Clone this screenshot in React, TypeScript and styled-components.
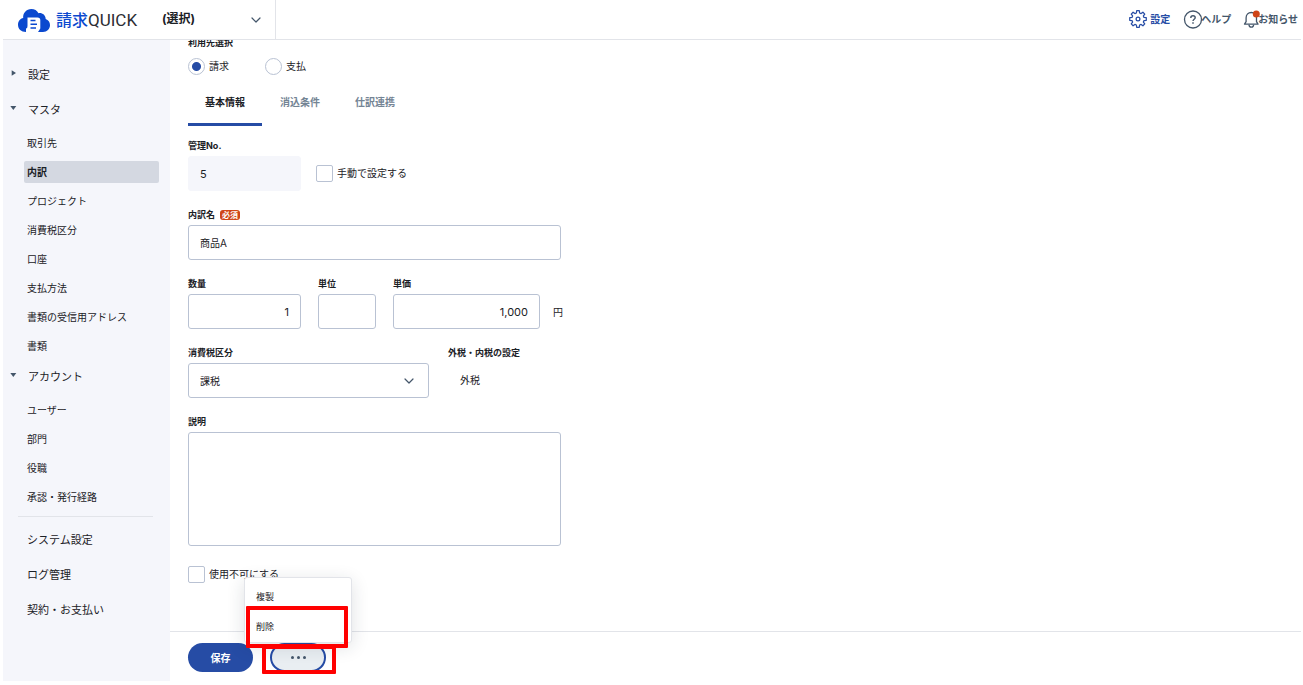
import React, { useState } from 'react';
import styled, { createGlobalStyle } from 'styled-components';

const color = {
  primary: '#264ca5',
  text: '#1b2126',
  slate: '#44566a',
  muted: '#748494',
  line: '#e2e4e9',
  field: '#b9c2d3',
  panel: '#f5f6fb',
  active: '#d4d8e1',
  danger: '#cf4417',
  mark: '#ff0000',
};

const GlobalStyle = createGlobalStyle`
  *, *::before, *::after { box-sizing: border-box; }
  body { margin: 0; background: #fff; }
  body, button, input, select, textarea {
    font-family: Inter, 'Noto Sans CJK JP', sans-serif;
    font-size: 10px;
    color: ${color.text};
  }
  a { color: inherit; text-decoration: none; }
  ul { list-style: none; margin: 0; padding: 0; }
`;

const Page = styled.div`
  display: flex;
  flex-direction: column;
  min-height: 100vh;
  padding: 0 2px 4px 3px;
`;

/* ---------- header ---------- */

const Header = styled.header`
  display: flex;
  align-items: stretch;
  height: 40px;
  border-bottom: 1px solid ${color.line};
`;

const Brand = styled.a`
  display: flex;
  align-items: center;
  width: 148px;
  padding-left: 15px;
  gap: 6px;
`;

const BrandName = styled.span`
  display: flex;
  align-items: center;
  font-size: 16px;
  line-height: 24px;
  font-weight: 500;
  color: #0b49cf;
`;

const BrandLatin = styled.span`
  font-family: Roboto, sans-serif;
  font-size: 17px;
  font-weight: 400;
  color: #2c2d33;
`;

const SelectBox = styled.div<{ $bordered?: boolean }>`
  position: relative;
  display: flex;
  height: ${(p) => (p.$bordered ? '35px' : 'auto')};

  svg {
    position: absolute;
    top: 50%;
    right: 15px;
    transform: translateY(-50%);
    pointer-events: none;
  }
`;

const CompanySelect = styled.select`
  appearance: none;
  width: 125px;
  padding: 0 32px 2px 11px;
  border: 0;
  border-right: 1px solid ${color.line};
  background: transparent;
  font-size: 12px;
  font-weight: 700;
`;

const HeaderLinks = styled.nav`
  display: flex;
  align-items: center;
  gap: 13px;
  margin-left: auto;
  padding: 0 3px 2px 0;
`;

const HeaderLink = styled.a<{ $active?: boolean }>`
  display: flex;
  align-items: center;
  gap: ${(p) => (p.$active ? '3px' : '0')};
  font-weight: 700;
  line-height: 16px;
  white-space: nowrap;
  color: ${(p) => (p.$active ? color.primary : color.slate)};

  svg { overflow: visible; }
`;

/* ---------- sidebar ---------- */

const Body = styled.div`
  display: flex;
  flex: 1;
`;

const Sidebar = styled.nav`
  flex: 0 0 167px;
  padding: 23px 11px 0 7px;
  background: ${color.panel};
`;

const SectionToggle = styled.button`
  display: flex;
  align-items: center;
  width: 100%;
  height: 22px;
  padding: 0;
  border: 0;
  background: none;
  font-size: 11px;
  text-align: left;
  cursor: pointer;

  svg { width: 7px; margin-right: 11px; margin-bottom: 3px; }
`;

const Section = styled.div`
  margin-bottom: 13px;
`;

const SubList = styled.ul`
  display: flex;
  flex-direction: column;
  gap: 7px;
  padding: 12px 0 0 14px;
  margin-bottom: -5px;
`;

const SubLink = styled.a<{ $active?: boolean }>`
  display: block;
  padding-left: 3px;
  border-radius: 2px;
  line-height: 22px;
  font-weight: ${(p) => (p.$active ? 700 : 400)};
  background: ${(p) => (p.$active ? color.active : 'transparent')};
`;

const SideDivider = styled.hr`
  margin: 0 6px 12px 8px;
  border: 0;
  border-top: 1px solid ${color.line};
`;

const PlainLink = styled.a`
  display: block;
  margin-bottom: 13px;
  padding-left: 17px;
  font-size: 11px;
  line-height: 22px;
`;

/* ---------- form ---------- */

const Main = styled.main`
  display: flex;
  flex: 1;
  flex-direction: column;
  min-width: 0;
`;

const Scroller = styled.div`
  flex: 1;
  overflow: hidden;
  padding: 0 18px 24px;
`;

const Form = styled.form`
  max-width: 375px;
  margin-top: -3px;
`;

const Label = styled.label`
  display: flex;
  align-items: center;
  gap: 5px;
  margin-bottom: 4px;
  font-size: 9px;
  line-height: 12px;
  font-weight: 700;
  white-space: nowrap;
`;

const Required = styled.span`
  padding: 0 2px;
  border-radius: 3px;
  background: ${color.danger};
  color: #fff;
  font-size: 8px;
  line-height: 10px;
`;

const RadioRow = styled.div`
  display: flex;
  gap: 36px;
  margin: 9px 0 5px;
`;

const Choice = styled.label`
  display: flex;
  align-items: center;
  gap: 4px;
  line-height: 17px;
  white-space: nowrap;
`;

const Radio = styled.input.attrs({ type: 'radio' })`
  appearance: none;
  width: 17px;
  height: 17px;
  margin: 0;
  border: 1px solid ${color.field};
  border-radius: 50%;
  background: #fff;

  &:checked {
    background: radial-gradient(circle, ${color.primary} 4px, #fff 5px);
  }
`;

const Check = styled.input.attrs({ type: 'checkbox' })`
  appearance: none;
  width: 17px;
  height: 17px;
  margin: 0;
  border: 1px solid ${color.field};
  border-radius: 2px;
  background: #fff;

  &:checked { background: ${color.primary}; }
`;

const Tabs = styled.div`
  display: flex;
  gap: 1px;
  margin-bottom: 14px;
`;

const Tab = styled.button<{ $active?: boolean }>`
  height: 46px;
  padding: 0 17px;
  border: 0;
  border-bottom: 3px solid ${(p) => (p.$active ? color.primary : 'transparent')};
  background: none;
  font-weight: 700;
  color: ${(p) => (p.$active ? color.text : color.muted)};
`;

const Row = styled.div<{ $gap: number }>`
  display: flex;
  align-items: flex-end;
  gap: ${(p) => p.$gap}px;
`;

const Field = styled.div<{ $width?: number }>`
  width: ${(p) => (p.$width ? `${p.$width}px` : 'auto')};
  margin-bottom: 18px;
`;

const Input = styled.input<{ $numeric?: boolean; $wide?: boolean }>`
  display: block;
  width: ${(p) => (p.$wide ? '373px' : '100%')};
  height: 35px;
  padding: 0 11px;
  border: 1px solid ${color.field};
  border-radius: 3px;
  background: #fff;
  font-size: ${(p) => (p.$numeric ? '11px' : '10px')};
  text-align: ${(p) => (p.$numeric ? 'right' : 'left')};

  &:read-only {
    border-color: ${color.panel};
    background: ${color.panel};
    text-align: left;
  }
`;

const FieldSelect = styled.select`
  appearance: none;
  width: 100%;
  padding: 0 36px 0 11px;
  border: 1px solid ${color.field};
  border-radius: 3px;
  background: #fff;
`;

const Inline = styled.div`
  display: flex;
  align-items: center;
  height: 35px;
  margin-bottom: 18px;
`;

const Value = styled.output`
  display: block;
  padding-left: 12px;
  line-height: 35px;
`;

const TextArea = styled.textarea`
  display: block;
  width: 373px;
  height: 114px;
  margin-bottom: 20px;
  padding: 8px 11px;
  border: 1px solid ${color.field};
  border-radius: 3px;
  resize: none;
`;

/* ---------- footer ---------- */

const Footer = styled.footer`
  display: flex;
  gap: 17px;
  height: 50px;
  padding: 11px 18px 0;
  border-top: 1px solid ${color.line};
`;

const SaveButton = styled.button`
  width: 65px;
  height: 29px;
  padding: 0;
  border: 0;
  border-radius: 15px;
  background: ${color.primary};
  color: #fff;
  font-weight: 700;
`;

const MoreWrap = styled.div`
  position: relative;
  height: 29px;
`;

const MoreButton = styled.button`
  display: flex;
  align-items: center;
  justify-content: center;
  width: 56px;
  height: 29px;
  padding: 0;
  border: 2px solid ${color.primary};
  border-radius: 15px;
  background: #e9eef2;
`;

const Menu = styled.div`
  position: absolute;
  bottom: 100%;
  left: -26px;
  width: 108px;
  padding: 3px 0 1px;
  border: 1px solid ${color.line};
  border-radius: 3px;
  background: #fff;
  box-shadow: 0 4px 18px rgba(30, 40, 60, 0.14);
`;

const MenuItem = styled.button`
  display: block;
  width: 100%;
  height: 30px;
  padding: 0 11px;
  border: 0;
  background: none;
  font-size: 9px;
  text-align: left;
`;

const Highlight = styled.div`
  position: absolute;
  border: 4px solid ${color.mark};
  border-radius: 1px;
  pointer-events: none;
`;

const MenuHighlight = styled(Highlight)`
  top: -37px;
  left: -24px;
  width: 102px;
  height: 42px;
`;

const MoreHighlight = styled(Highlight)`
  top: 2px;
  left: -8px;
  width: 74px;
  height: 29px;
`;

/* ---------- drawings ---------- */

const CloudLogo = () => (
  <svg width="32" height="24" viewBox="0 0 32 24" aria-hidden="true">
    <path
      d="M8 24C3.200 24 0 21 0 16.800C0 13.400 2.200 10.800 5.200 10.100C4.600 5 8.500 1 13.300 1C16.600 1 19.100 2.600 20.500 5.200C24.200 4.600 27.500 7 27.700 10.900C30.300 11.800 32 14.100 32 17C32 21 29 24 25 24Z"
      fill="#0b49cf"
    />
    <path d="M9.500 9.500H19.500Q22.300 9.500 22.300 12V20.500L20 24H8V20.500Q9.500 20.500 9.500 18Z" fill="#fff" />
    <path d="M12.500 12.500H17.500M12.500 16.200H19M12.500 20H18" stroke="#0b49cf" strokeWidth="1.500" />
  </svg>
);

const Chevron = () => (
  <svg width="10" height="6" viewBox="0 0 10 6" fill="none" stroke={color.slate} strokeWidth="1.200" aria-hidden="true">
    <path d="M1 1L5 5L9 1" strokeLinecap="round" strokeLinejoin="round" />
  </svg>
);

const Triangle = ({ open }: { open: boolean }) => (
  <svg height="6" viewBox="0 0 7 6" fill={color.slate} aria-hidden="true">
    {open ? <path d="M0.300 1H6.300L3.300 5Z" /> : <path d="M1.700 0.200L6 3L1.700 5.800Z" />}
  </svg>
);

const gearPath = (() => {
  const parts: string[] = [];
  const point = (radius: number, degrees: number) => {
    const a = (degrees * Math.PI) / 180;
    return `${(10 + radius * Math.cos(a)).toFixed(2)} ${(10 + radius * Math.sin(a)).toFixed(2)}`;
  };
  for (let tooth = 0; tooth < 8; tooth += 1) {
    const mid = tooth * 45;
    parts.push(`${point(6.9, mid - 15)} L${point(9.3, mid - 9)}`);
    parts.push(`${point(9.3, mid + 9)} L${point(6.9, mid + 15)}`);
  }
  return `M${parts.join(' L')}Z`;
})();

const GearIcon = () => (
  <svg width="18" height="18" viewBox="0 0 20 20" fill="none" stroke="currentColor" strokeWidth="1.400" strokeLinejoin="round" aria-hidden="true">
    <path d={gearPath} />
    <circle cx="10" cy="10" r="2.100" />
  </svg>
);

const HelpIcon = () => (
  <svg width="18" height="18" viewBox="0 0 18 18" fill="none" stroke="currentColor" strokeWidth="1.300" aria-hidden="true">
    <circle cx="10" cy="9.500" r="8.500" />
    <path d="M7.800 7.900C7.800 6.500 8.700 5.800 10 5.800S12.200 6.600 12.200 7.700C12.200 9.200 10 9.300 10 11" strokeWidth="1.400" />
    <path d="M10 12.200V13.700" strokeWidth="1.500" />
  </svg>
);

const BellIcon = () => (
  <svg width="14" height="18" viewBox="0 0 14 18" fill="none" stroke="currentColor" strokeWidth="1.300" aria-hidden="true">
    <path d="M0.500 14.200H14L12.500 11.700V7.700C12.500 4.500 10.300 2.500 7.300 2.500S2.100 4.500 2.100 7.700V11.700Z" strokeLinejoin="round" />
    <path d="M5 14.700C5 18 9.600 18 9.600 14.700" />
    <circle cx="12.300" cy="4" r="3.500" fill={color.danger} stroke="none" />
  </svg>
);

const Dots = () => (
  <svg width="15" height="3" viewBox="0 0 15 3" fill={color.slate} aria-hidden="true">
    <circle cx="1.500" cy="1.500" r="1.500" />
    <circle cx="7.500" cy="1.500" r="1.500" />
    <circle cx="13.500" cy="1.500" r="1.500" />
  </svg>
);

/* ---------- data ---------- */

const sections = [
  { title: '設定', items: [] },
  {
    title: 'マスタ',
    items: ['取引先', '内訳', 'プロジェクト', '消費税区分', '口座', '支払方法', '書類の受信用アドレス', '書類'],
  },
  { title: 'アカウント', items: ['ユーザー', '部門', '役職', '承認・発行経路'] },
];

const plainLinks = ['システム設定', 'ログ管理', '契約・お支払い'];
const tabs = ['基本情報', '消込条件', '仕訳連携'];

export default function App() {
  const [tab, setTab] = useState(tabs[0]);

  return (
    <>
      <GlobalStyle />
      <Page>
        <Header>
          <Brand href="#">
            <CloudLogo />
            <BrandName>
              請求<BrandLatin>QUICK</BrandLatin>
            </BrandName>
          </Brand>
          <SelectBox>
            <CompanySelect aria-label="会社">
              <option>(選択)</option>
            </CompanySelect>
            <Chevron />
          </SelectBox>
          <HeaderLinks>
            <HeaderLink href="#" $active>
              <GearIcon />
              設定
            </HeaderLink>
            <HeaderLink href="#">
              <HelpIcon />
              ヘルプ
            </HeaderLink>
            <HeaderLink href="#">
              <BellIcon />
              お知らせ
            </HeaderLink>
          </HeaderLinks>
        </Header>

        <Body>
          <Sidebar>
            {sections.map((section) => (
              <Section key={section.title}>
                <SectionToggle type="button" aria-expanded={section.items.length > 0}>
                  <Triangle open={section.items.length > 0} />
                  {section.title}
                </SectionToggle>
                {section.items.length > 0 && (
                  <SubList>
                    {section.items.map((item) => (
                      <li key={item}>
                        <SubLink href="#" $active={item === '内訳'}>
                          {item}
                        </SubLink>
                      </li>
                    ))}
                  </SubList>
                )}
              </Section>
            ))}
            <SideDivider />
            {plainLinks.map((item) => (
              <PlainLink href="#" key={item}>
                {item}
              </PlainLink>
            ))}
          </Sidebar>

          <Main>
            <Scroller>
              <Form id="item-form" onSubmit={(e) => e.preventDefault()}>
                <Label as="div" id="usage">利用先選択</Label>
                <RadioRow role="radiogroup" aria-labelledby="usage">
                  <Choice>
                    <Radio name="usage" defaultChecked />
                    請求
                  </Choice>
                  <Choice>
                    <Radio name="usage" />
                    支払
                  </Choice>
                </RadioRow>

                <Tabs role="tablist">
                  {tabs.map((name) => (
                    <Tab
                      key={name}
                      type="button"
                      role="tab"
                      aria-selected={tab === name}
                      $active={tab === name}
                      onClick={() => setTab(name)}
                    >
                      {name}
                    </Tab>
                  ))}
                </Tabs>

                <Row $gap={15}>
                  <Field $width={113}>
                    <Label htmlFor="number">管理No.</Label>
                    <Input id="number" $numeric readOnly defaultValue="5" />
                  </Field>
                  <Inline>
                    <Choice>
                      <Check />
                      手動で設定する
                    </Choice>
                  </Inline>
                </Row>

                <Field>
                  <Label htmlFor="name">
                    内訳名<Required>必須</Required>
                  </Label>
                  <Input id="name" $wide defaultValue="商品A" />
                </Field>

                <Row $gap={17}>
                  <Field $width={113}>
                    <Label htmlFor="quantity">数量</Label>
                    <Input id="quantity" $numeric defaultValue="1" />
                  </Field>
                  <Field $width={58}>
                    <Label htmlFor="unit">単位</Label>
                    <Input id="unit" />
                  </Field>
                  <Row $gap={13}>
                    <Field $width={147}>
                      <Label htmlFor="price">単価</Label>
                      <Input id="price" $numeric defaultValue="1,000" />
                    </Field>
                    <Inline>円</Inline>
                  </Row>
                </Row>

                <Row $gap={19}>
                  <Field $width={241}>
                    <Label htmlFor="tax">消費税区分</Label>
                    <SelectBox $bordered>
                      <FieldSelect id="tax">
                        <option>課税</option>
                      </FieldSelect>
                      <Chevron />
                    </SelectBox>
                  </Field>
                  <Field>
                    <Label htmlFor="tax-mode">外税・内税の設定</Label>
                    <Value id="tax-mode">外税</Value>
                  </Field>
                </Row>

                <Label htmlFor="description">説明</Label>
                <TextArea id="description" />

                <Choice>
                  <Check />
                  使用不可にする
                </Choice>
              </Form>
            </Scroller>

            <Footer>
              <SaveButton type="submit" form="item-form">
                保存
              </SaveButton>
              <MoreWrap>
                <MoreButton type="button" aria-label="その他" aria-expanded="true">
                  <Dots />
                </MoreButton>
                <Menu role="menu">
                  <MenuItem role="menuitem">複製</MenuItem>
                  <MenuItem role="menuitem">削除</MenuItem>
                </Menu>
                <MoreHighlight />
                <MenuHighlight />
              </MoreWrap>
            </Footer>
          </Main>
        </Body>
      </Page>
    </>
  );
}
